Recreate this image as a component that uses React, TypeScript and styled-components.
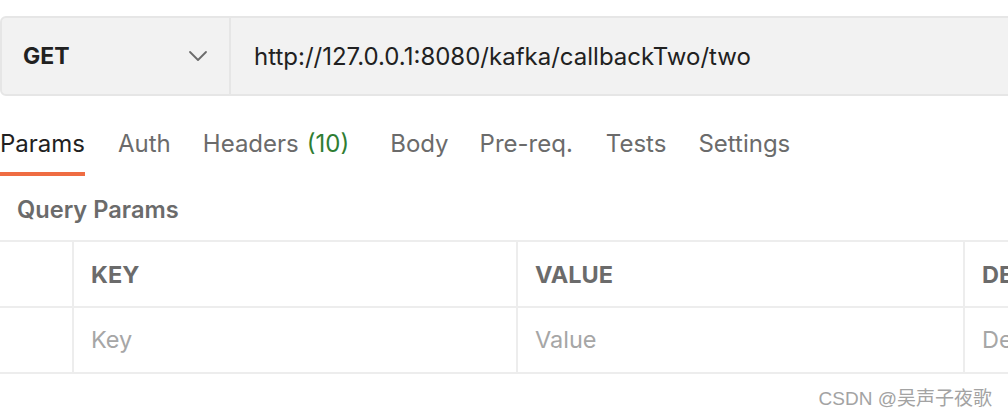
import React from "react";
import styled, { createGlobalStyle } from "styled-components";

const Global = createGlobalStyle`
  html, body { margin: 0; padding: 0; background: #fff; }
  body { font-family: Inter, "Noto Sans", sans-serif; overflow: hidden; width: 1008px; height: 418px; }
`;

const Page = styled.div`
  width: 1008px;
  height: 418px;
  position: relative;
  overflow: hidden;
  padding-top: 16px;
  box-sizing: border-box;
`;

const UrlBar = styled.div`
  display: flex;
  width: 1040px;
  height: 80px;
  box-sizing: border-box;
  border: 2px solid #e6e6e6;
  border-radius: 6px;
  background: #f2f2f2;
`;

const Method = styled.div`
  width: 229px;
  flex: none;
  display: flex;
  align-items: center;
  justify-content: space-between;
  padding: 0 21px 0 21px;
  box-sizing: border-box;
  border-right: 2px solid #e6e6e6;
  font-size: 23px;
  font-weight: 700;
  color: #212121;
`;

const UrlText = styled.div`
  display: flex;
  align-items: center;
  padding-left: 23px;
  font-size: 24px;
  color: #212121;
`;

const Tabs = styled.div`
  display: flex;
  height: 80px;
  align-items: stretch;
`;

const Tab = styled.div<{ $active?: boolean; $gap: number }>`
  margin-right: ${(p) => p.$gap}px;
  display: flex;
  align-items: flex-end;
  padding-bottom: 14px;
  font-size: 24px;
  color: ${(p) => (p.$active ? "#212121" : "#6b6b6b")};
  box-sizing: border-box;
  border-bottom: 4px solid ${(p) => (p.$active ? "#ef6c42" : "transparent")};
  height: 64px;
  margin-top: 16px;
`;

const Count = styled.span`
  color: #2f7d32;
  margin-left: 8px;
`;

const SectionTitle = styled.div`
  padding: 19px 0 0 17px;
  height: 64px;
  box-sizing: border-box;
  font-size: 23.6px;
  font-weight: 600;
  color: #6b6b6b;
`;

const Table = styled.div`
  width: 1060px;
  border-top: 2px solid #ededed;
`;

const Row = styled.div`
  display: grid;
  grid-template-columns: 74px 444px 447px 1fr;
  height: 66px;
  box-sizing: border-box;
  border-bottom: 2px solid #ededed;
`;

const Cell = styled.div<{ $head?: boolean }>`
  display: flex;
  align-items: center;
  padding-left: 17px;
  padding-bottom: ${(p) => (p.$head ? "0" : "2px")};
  border-right: 2px solid #ededed;
  font-size: 23.5px;
  font-weight: ${(p) => (p.$head ? 700 : 400)};
  color: ${(p) => (p.$head ? "#6b6b6b" : "#a6a6a6")};
  white-space: nowrap;
  overflow: hidden;
`;

const Watermark = styled.div`
  position: absolute;
  right: 16px;
  bottom: 8px;
  font-family: "Liberation Sans", "Noto Sans CJK SC", sans-serif;
  font-size: 19px;
  color: #a3a3a3;
`;

const Chevron = () => (
  <svg width="20" height="12" viewBox="0 0 20 12" fill="none">
    <path d="M2 2 L10 10 L18 2" stroke="#6b6b6b" strokeWidth="1.8" strokeLinecap="round" strokeLinejoin="round" />
  </svg>
);

export default function App() {
  return (
    <Page>
      <Global />
      <UrlBar>
        <Method>
          <span>GET</span>
          <Chevron />
        </Method>
        <UrlText>http://127.0.0.1:8080/kafka/callbackTwo/two</UrlText>
      </UrlBar>
      <Tabs>
        <Tab $active $gap={33}>Params</Tab>
        <Tab $gap={32}>Auth</Tab>
        <Tab $gap={41}>
          Headers<Count>(10)</Count>
        </Tab>
        <Tab $gap={31}>Body</Tab>
        <Tab $gap={33}>Pre-req.</Tab>
        <Tab $gap={32}>Tests</Tab>
        <Tab $gap={0}>Settings</Tab>
      </Tabs>
      <SectionTitle>Query Params</SectionTitle>
      <Table>
        <Row>
          <Cell $head />
          <Cell $head>KEY</Cell>
          <Cell $head>VALUE</Cell>
          <Cell $head>DESCRIPTION</Cell>
        </Row>
        <Row>
          <Cell />
          <Cell>Key</Cell>
          <Cell>Value</Cell>
          <Cell>Description</Cell>
        </Row>
      </Table>
      <Watermark>CSDN @吴声子夜歌</Watermark>
    </Page>
  );
}
